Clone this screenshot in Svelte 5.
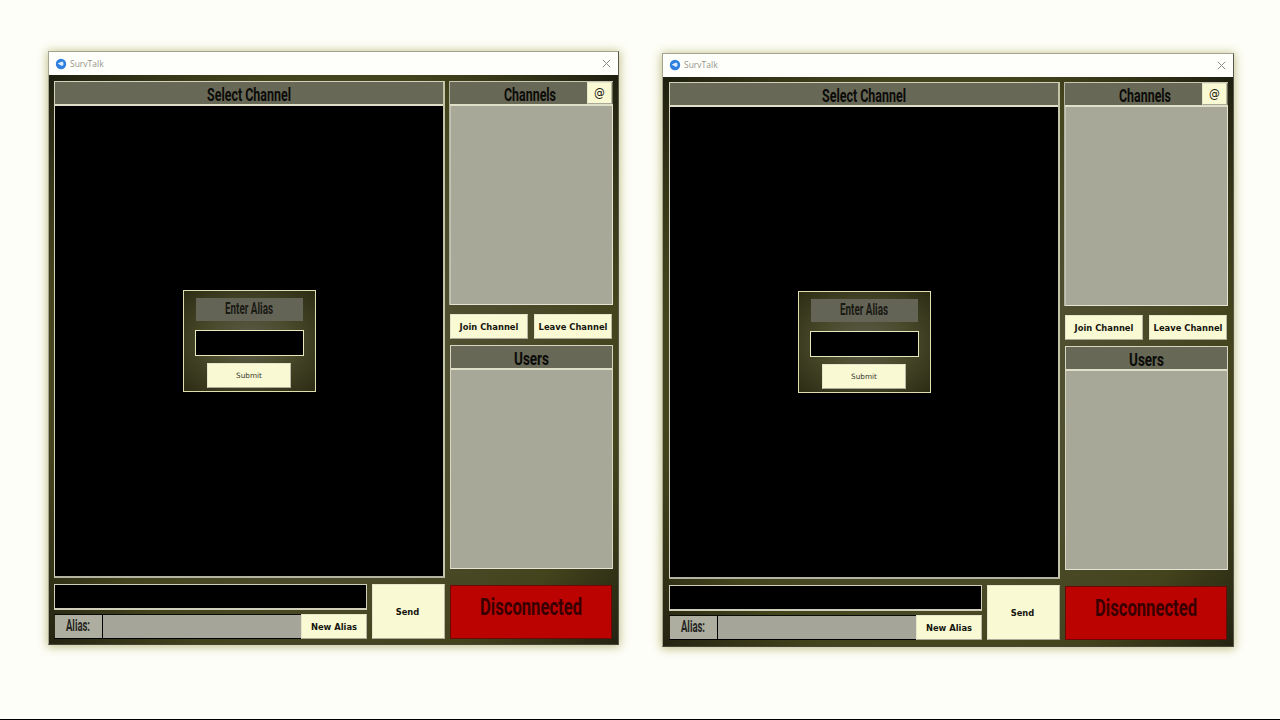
<script>
  const windows = [{ id: 'first' }, { id: 'second' }];
</script>

{#snippet label(text, width, size, height, base)}
  <svg class="label" {width} {height} aria-label={text}>
    <text x="0" y={base} textLength={width} lengthAdjust="spacingAndGlyphs" font-size={size}>{text}</text>
  </svg>
{/snippet}

<main>
  {#each windows as w (w.id)}
    <section class="window {w.id}">
      <header class="titlebar">
        <svg class="logo" width="12" height="12" viewBox="0 0 12 12">
          <circle cx="6" cy="6" r="5.2" fill="#2f7fe0" />
          <path d="M2.6 5.6 L7 3.6 L8.4 4.6 V7 L7 8 L5.6 7.2 Z" fill="#dcecff" />
        </svg>
        <span class="title">SurvTalk</span>
        <svg class="close" width="9" height="9" viewBox="0 0 9 9">
          <path d="M.8 .8 L8.2 8.2 M8.2 .8 L.8 8.2" stroke="#8c8c86" stroke-width="1" fill="none" />
        </svg>
      </header>
      <div class="body">
        <div class="left">
          <div class="chat">
            <div class="head">{@render label('Select Channel', 84, 17.5, 20, 16)}</div>
            <div class="messages">
              <form class="dialog">
                <div class="prompt">{@render label('Enter Alias', 48, 16.5, 20, 15)}</div>
                <div class="field"></div>
                <button type="button" class="submit">Submit</button>
              </form>
            </div>
          </div>
          <div class="compose">
            <div class="inputs">
              <div class="entry"></div>
              <div class="alias">
                <div class="tag">{@render label('Alias:', 24, 16, 20, 16)}</div>
                <div class="name"></div>
                <button type="button" class="new">New Alias</button>
              </div>
            </div>
            <button type="button" class="send">Send</button>
          </div>
        </div>
        <div class="right">
          <div class="channels">
            <div class="head">
              <div class="caption">{@render label('Channels', 52, 17.5, 20, 16)}</div>
              <button type="button" class="at">@</button>
            </div>
            <div class="list"></div>
          </div>
          <div class="actions">
            <button type="button">Join Channel</button>
            <button type="button">Leave Channel</button>
          </div>
          <div class="users">
            <div class="head">{@render label('Users', 35, 17.5, 20, 16)}</div>
            <div class="list"></div>
          </div>
          <div class="status">{@render label('Disconnected', 102, 23, 26, 21)}</div>
        </div>
      </div>
    </section>
  {/each}
</main>

<style>
  :global(body) {
    margin: 0;
    background: #fefef8;
  }
  * {
    box-sizing: border-box;
  }
  main {
    width: 1280px;
    height: 720px;
    padding: 51px 0 0 48px;
    display: flex;
    align-items: flex-start;
    gap: 43px;
    border-bottom: 1px solid #000;
    overflow: hidden;
    background: #fefef8;
    font-family: 'DejaVu Sans', sans-serif;
  }
  .window {
    flex: none;
    width: 571px;
    height: 594px;
    border: 1px solid #a3a38f;
    border-bottom-color: #45453a;
    border-right-color: #55554a;
    box-shadow: 0 1px 9px 1px rgba(120, 120, 10, 0.45);
    display: flex;
    flex-direction: column;
  }
  .second {
    width: 572px;
    margin-top: 2px;
  }
  .second .titlebar {
    padding-bottom: 1px;
  }
  .second .body {
    padding: 5px 5px 6px 6px;
  }
  .titlebar {
    height: 23px;
    flex: none;
    background: #fefefb;
    display: flex;
    align-items: center;
    padding: 0 7px 0 6px;
  }
  .title {
    font-family: 'Open Sans', sans-serif;
    font-size: 8.5px;
    line-height: 12px;
    color: #96968a;
    margin: 0 auto 0 3px;
  }
  .logo,
  .close,
  .label {
    display: block;
    flex: none;
  }
  .label {
    overflow: visible;
  }
  .body {
    flex: 1;
    display: flex;
    gap: 4px;
    padding: 6px 5px 5px 5px;
    background: radial-gradient(ellipse at 50% 52%, #55553a 0%, #4c4c2c 45%, #43431c 72%, #1e1e10 100%);
  }
  .label text {
    font-family: 'Liberation Sans Narrow', 'Roboto', sans-serif;
    font-weight: 700;
    fill: #0b0b08;
  }
  .left {
    width: 391px;
    display: flex;
    flex-direction: column;
    gap: 6px;
  }
  .chat {
    height: 497px;
    border: 1px solid #d2d2bc;
    border-width: 1px 2px 2px 1px;
    border-right-color: #c4c4a8;
    border-bottom-color: #b4b4a2;
    display: flex;
    flex-direction: column;
  }
  .head {
    height: 24px;
    flex: none;
    display: flex;
    justify-content: center;
    padding-top: 3px;
    background: #686857;
    border-bottom: 2px solid #e0e0c8;
  }
  .messages {
    flex: 1;
    background: #000;
    display: flex;
    align-items: center;
    justify-content: center;
  }
  .dialog {
    width: 133px;
    height: 102px;
    margin: 0;
    border: 1px solid #deded0;
    border-color: #dedeae;
    background: radial-gradient(ellipse at 50% 50%, #5c5c4c 0%, #4a4a2c 45%, #2c2c14 100%);
    display: flex;
    flex-direction: column;
    align-items: center;
    padding-top: 7px;
  }
  .prompt {
    width: 107px;
    height: 23px;
    padding-top: 1px;
    display: flex;
    justify-content: center;
    background: #646456;
  }
  .prompt .label text {
    fill: #1a1a14;
  }
  .field {
    width: 109px;
    height: 26px;
    margin: 9px 0 7px;
    background: #000;
    border: 1px solid #e8e8bc;
  }
  button {
    font-family: 'DejaVu Sans Condensed', 'DejaVu Sans', sans-serif;
    font-stretch: condensed;
    font-weight: 700;
    font-size: 9.3px;
    line-height: 12px;
    padding: 0;
    border: 1px solid #e6e6cb;
    border-right-color: #b8b8a5;
    border-bottom-color: #aaa998;
    background: #f9f9d4;
    color: #15150f;
    white-space: nowrap;
  }
  .submit {
    width: 84px;
    height: 25px;
    font-stretch: normal;
    font-family: 'DejaVu Sans', sans-serif;
    font-weight: 400;
    font-size: 7.3px;
    color: #3b3b30;
  }
  .compose {
    display: flex;
    gap: 5px;
  }
  .inputs {
    width: 313px;
    display: flex;
    flex-direction: column;
    gap: 4px;
  }
  .entry {
    height: 26px;
    background: #000;
    border: 1px solid #cfcfba;
    border-width: 1px 1px 2px 1px;
  }
  .alias {
    height: 25px;
    display: flex;
    padding-left: 1px;
    border-top: 1px solid #0a0a06;
    border-bottom: 1px solid #000;
  }
  .tag {
    width: 48px;
    display: flex;
    justify-content: center;
    padding: 0 2px 0 0;
    background: #aeaea0;
    border-right: 1px solid #000;
  }
  .tag .label text {
    fill: #242420;
  }
  .name {
    flex: 1;
    background: #a5a599;
  }
  .new {
    width: 66px;
    height: 25px;
    margin-top: -1px;
  }
  .send {
    width: 73px;
    height: 55px;
    padding-right: 2px;
  }
  .right {
    width: 164px;
    display: flex;
    flex-direction: column;
  }
  .channels {
    height: 224px;
    display: flex;
    flex-direction: column;
    border-left: 1px solid #b3b3a1;
  }
  .channels .head {
    height: 25px;
    padding: 0;
    border-top: 1px solid #c8c8b2;
  }
  .caption {
    flex: 1;
    padding: 3px 0 0 54px;
  }
  .at {
    width: 25px;
    font-weight: 400;
    font-size: 12px;
    margin-right: 1px;
  }
  .list {
    flex: 1;
    background: #a8a899;
    border: 1px solid #e4e4d4;
    border-top: 0;
    border-left-color: #c3c3b4;
  }
  .actions {
    display: flex;
    justify-content: space-between;
    padding: 0 1px;
    margin: 9px 0 6px;
  }
  .actions button {
    width: 78px;
    height: 25px;
  }
  .users {
    height: 224px;
    margin-left: 1px;
    display: flex;
    flex-direction: column;
    border: 1px solid #d6d6c2;
    border-width: 1px 1px 0 1px;
  }
  .users .list {
    border-width: 0 0 1px;
  }
  .status {
    height: 54px;
    margin: 16px 1px 0;
    background: #bb0301;
    border: 1px solid #6c0805;
    display: flex;
    justify-content: center;
    padding-top: 8px;
  }
  .status .label text {
    fill: #380000;
  }
</style>
